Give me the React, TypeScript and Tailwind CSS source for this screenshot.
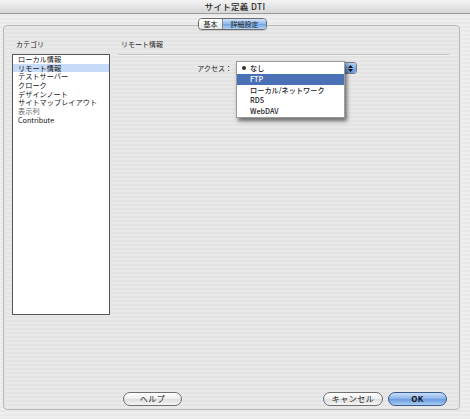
import React from 'react';

const CATEGORIES = [
  { label: 'ローカル情報' },
  { label: 'リモート情報', selected: true },
  { label: 'テストサーバー' },
  { label: 'クローク' },
  { label: 'デザインノート' },
  { label: 'サイトマップレイアウト' },
  { label: '表示列', dim: true },
  { label: 'Contribute' },
];

const MENU = ['FTP', 'ローカル/ネットワーク', 'RDS', 'WebDAV'];

const FONT = "font-['Noto_Sans_CJK_JP','Noto_Sans',sans-serif]";

function PillButton({ label, width, primary }: { label: string; width: string; primary?: boolean }) {
  return (
    <div
      className={`${width} h-[14px] rounded-full border flex items-center justify-center text-[8px] leading-none tracking-[0.5px] ${
        primary
          ? 'border-[#3b5a8c] bg-[linear-gradient(180deg,#c9ddf7_0%,#8fb6ea_45%,#6b9de0_55%,#a9cdf5_100%)] text-[#111] font-semibold'
          : 'border-[#6f6f6f] bg-[linear-gradient(180deg,#ffffff_0%,#f0f0f0_45%,#dedede_55%,#f6f6f6_100%)] text-[#222]'
      }`}
    >
      {label}
    </div>
  );
}

export default function App() {
  return (
    <div
      className={`${FONT} w-[470px] h-[419px] overflow-hidden flex flex-col bg-[repeating-linear-gradient(180deg,#efefef_0px,#efefef_2px,#e9e9e9_2px,#e9e9e9_4px)] text-[#222]`}
    >
      {/* title bar */}
      <div className="h-[14px] shrink-0 border-b border-[#9a9a9a] bg-[linear-gradient(180deg,#f4f4f4,#d6d6d6)] flex items-center justify-center">
        <span className="text-[8.5px] font-medium text-[#2a2a2a] leading-none tracking-[0.3px]">サイト定義 DTI</span>
      </div>

      {/* tabs */}
      <div className="relative z-10 mt-[4px] flex justify-center">
        <div className="flex h-[12px] ml-[-5px] rounded-[4px] border border-[#6a6a6a] overflow-hidden text-[7px] leading-none shadow-[0_1px_1px_rgba(0,0,0,0.15)]">
          <div className="w-[24px] flex items-center justify-center bg-[linear-gradient(180deg,#ffffff,#e6e6e6)] border-r border-[#8a8a8a]">
            基本
          </div>
          <div className="w-[43px] flex items-center justify-center bg-[linear-gradient(180deg,#cfe3fb_0%,#8db8ee_50%,#76a8e6_55%,#b3d4f7_100%)]">
            詳細設定
          </div>
        </div>
      </div>

      {/* group box */}
      <div className="mt-[-5px] mx-[3px] w-[457px] h-[385px] rounded-[4px] border border-[#b8b8b8] bg-[repeating-linear-gradient(180deg,#e9e9e9_0px,#e9e9e9_2px,#e4e4e4_2px,#e4e4e4_4px)] flex flex-col">
        <div className="flex pl-[8px] gap-[8px]">
          {/* category column */}
          <div className="flex flex-col w-[98px]">
            <div className="pt-[14px] pl-[4px] h-[24px] text-[7px] leading-[9px]">カテゴリ</div>
            <div className="mt-[4px] h-[261px] bg-white border border-[#555] flex flex-col overflow-hidden">
              {CATEGORIES.map(c => (
                <div
                  key={c.label}
                  className={`h-[8.7px] shrink-0 pl-[5px] text-[7.2px] leading-[8.7px] whitespace-nowrap ${
                    c.selected ? 'bg-[#c6dbf7]' : ''
                  } ${c.dim ? 'text-[#666]' : 'text-[#111]'}`}
                >
                  {c.label}
                </div>
              ))}
            </div>
          </div>

          {/* detail column */}
          <div className="flex flex-col w-[331px]">
            <div className="pt-[14px] pl-[3px] h-[24px] text-[7px] leading-[9px]">リモート情報</div>
            <div className="mt-[4px] h-[2px] bg-[#c3c3c3] border-b border-[#f5f5f5]" />
            <div className="mt-[6px] flex items-center">
              <div className="w-[118px] pr-[4px] text-right text-[7px] leading-[9px]">アクセス：</div>
              <div className="relative w-[121px] h-[12px] rounded-[3px] border border-[#7a7a7a] bg-white flex justify-end">
                <div className="w-[12px] h-full rounded-r-[3px] bg-[linear-gradient(180deg,#a9cdf5,#5f93dc)] flex flex-col items-center justify-center gap-[1px]">
                  <svg width="5" height="3" viewBox="0 0 5 3"><path d="M0 3 L2.5 0 L5 3 Z" fill="#111" /></svg>
                  <svg width="5" height="3" viewBox="0 0 5 3"><path d="M0 0 L2.5 3 L5 0 Z" fill="#111" /></svg>
                </div>

                {/* open menu */}
                <div className="absolute left-[-1px] top-[-2px] w-[109px] h-[57px] bg-white border border-[#9c9c9c] shadow-[2px_3px_4px_rgba(0,0,0,0.55)] flex flex-col text-[7.2px] font-medium">
                  <div className="h-[13px] flex items-center pl-[5px] gap-[4px]">
                    <span className="w-[4px] h-[4px] rounded-full bg-[#333]" />
                    <span>なし</span>
                  </div>
                  {MENU.map((m, i) => (
                    <div
                      key={m}
                      className={`h-[11px] flex items-center pl-[13px] ${
                        i === 0 ? 'bg-[#4a70b6] text-white' : 'text-[#222]'
                      }`}
                    >
                      {m}
                    </div>
                  ))}
                </div>
              </div>
            </div>
          </div>
        </div>

        {/* buttons */}
        <div className="mt-auto mb-[3px] flex items-center pl-[119px] pr-[12px]">
          <PillButton label="ヘルプ" width="w-[59px]" />
          <div className="ml-auto flex gap-[5px]">
            <PillButton label="キャンセル" width="w-[60px]" />
            <PillButton label="OK" width="w-[59px]" primary />
          </div>
        </div>
      </div>
    </div>
  );
}
